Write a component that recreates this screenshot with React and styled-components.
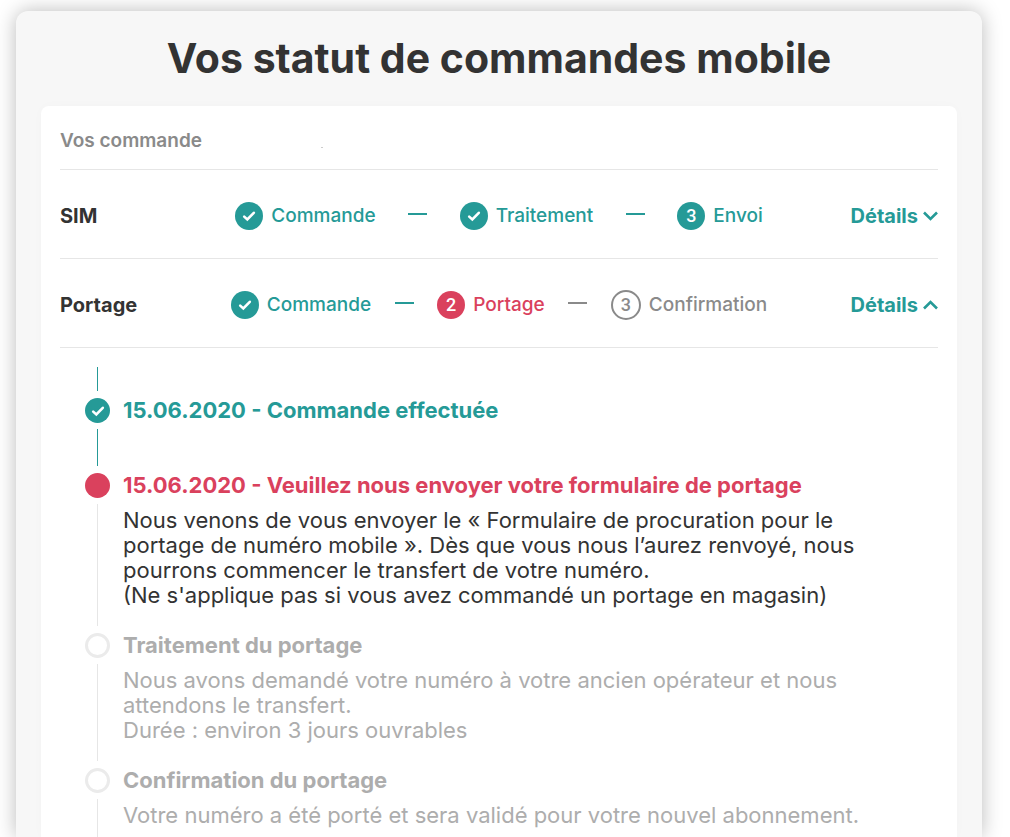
import React from "react";
import styled, { createGlobalStyle } from "styled-components";

const teal = "#259a97";
const red = "#da415d";
const grey = "#8a8a8a";
const pale = "#adadad";
const dark = "#333333";
const rule = "#e6e6e6";

const GlobalStyle = createGlobalStyle`
  * { box-sizing: border-box; }
  body {
    margin: 0;
    background: #ffffff;
    color: ${dark};
    font-family: Inter, "Liberation Sans", sans-serif;
  }
`;

const Page = styled.main`
  display: flex;
  min-height: 100vh;
  padding: 11px 28px 0 16px;
  overflow: hidden;
`;

const Panel = styled.section`
  flex: 1;
  display: flex;
  flex-direction: column;
  padding: 0 25px;
  border-radius: 12px 12px 0 0;
  background: #f7f7f7;
  box-shadow: 0 0 20px rgba(0, 0, 0, 0.27);
`;

const Title = styled.h1`
  margin: 0;
  height: 95px;
  line-height: 95px;
  font-size: 41px;
  font-weight: 700;
  text-align: center;
  white-space: nowrap;
`;

const Card = styled.div`
  flex: 1;
  display: flex;
  flex-direction: column;
  padding: 0 19px;
  border-radius: 8px 8px 0 0;
  background: #ffffff;
  box-shadow: 0 0 12px rgba(0, 0, 0, 0.02);
`;

const Row = styled.div`
  display: grid;
  grid-template-columns: 159px 1fr 159px;
  align-items: center;
  height: 89px;
  padding-top: 4px;
  border-bottom: 1px solid ${rule};
`;

const HeaderRow = styled.div`
  display: flex;
  align-items: center;
  gap: 119px;
  height: 64px;
  padding-top: 6px;
  border-bottom: 1px solid ${rule};
`;

const Heading = styled.h2`
  margin: 0;
  font-size: 19px;
  line-height: 24px;
  font-weight: 600;
  color: ${grey};
`;

const RowName = styled.h2`
  margin: 0;
  font-size: 20px;
  line-height: 24px;
  font-weight: 700;
`;

const OrderMark = styled.span`
  width: 2px;
  height: 1px;
  margin-top: 14px;
  background: #cccccc;
`;

const Steps = styled.ol`
  display: flex;
  justify-content: space-around;
  align-items: center;
  margin: 0;
  padding: 0;
  list-style: none;
`;

const Step = styled.li`
  display: flex;
  align-items: center;
  gap: 8px;
  font-size: 19px;
  line-height: 24px;
  font-weight: 500;
  color: ${(p) => p.$color};
`;

const Dash = styled.li`
  width: 19px;
  height: 2px;
  margin-bottom: 4px;
  background: ${(p) => p.$color};
`;

const Badge = styled.span`
  display: flex;
  align-items: center;
  justify-content: center;
  width: ${(p) => (p.$outline ? 30 : 28)}px;
  height: ${(p) => (p.$outline ? 30 : 28)}px;
  border-radius: 50%;
  border: ${(p) => (p.$outline ? "2px solid currentColor" : "none")};
  background: ${(p) => (p.$outline ? "#ffffff" : "currentColor")};
`;

const BadgeNumber = styled.span`
  font-family: Roboto, sans-serif;
  font-size: 18px;
  font-weight: 500;
  line-height: 20px;
  color: ${(p) => p.$color};
`;

const DetailsButton = styled.button`
  justify-self: end;
  display: flex;
  align-items: center;
  gap: 5px;
  padding: 0;
  border: 0;
  background: none;
  color: ${teal};
  font-family: inherit;
  font-size: 20px;
  line-height: 24px;
  font-weight: 700;
  cursor: pointer;
`;

const Timeline = styled.ol`
  flex: 1;
  display: flex;
  flex-direction: column;
  margin: 0;
  padding: 19px 0 0 25px;
  list-style: none;
`;

const Lead = styled.li`
  width: 1px;
  height: 24px;
  margin: 0 0 7px 12px;
  background: ${teal};
`;

const Item = styled.li`
  display: grid;
  grid-template-columns: 25px 1fr;
  column-gap: 13px;
  min-height: 75px;
  &:last-child {
    flex: 1;
    min-height: 0;
  }
`;

const Rail = styled.div`
  display: flex;
  flex-direction: column;
  align-items: center;
`;

const Dot = styled.span`
  display: flex;
  align-items: center;
  justify-content: center;
  width: 25px;
  height: 25px;
  border-radius: 50%;
  border: ${(p) => (p.$fill ? "none" : "3px solid #ebebeb")};
  background: ${(p) => p.$fill || "#ffffff"};
`;

const Line = styled.span`
  flex: 1;
  width: 1px;
  margin: 6px 0 ${(p) => (p.$last ? 0 : 7)}px;
  background: ${(p) => p.$color};
`;

const ItemTitle = styled.h3`
  margin: 0;
  font-size: 22px;
  line-height: 25px;
  font-weight: 700;
  color: ${(p) => p.$color};
`;

const ItemText = styled.p`
  margin: 0;
  padding: 10px 0 ${(p) => (p.$last ? 0 : 25)}px;
  font-size: 22px;
  line-height: 25px;
  color: ${(p) => p.$color};
`;

const Check = () => (
  <svg width="14" height="14" viewBox="0 0 14 14" fill="none" aria-hidden="true">
    <path d="M2.2 7.6 L5.3 10.4 L11.8 3.8" stroke="#fff" strokeWidth="2.6" strokeLinecap="round" strokeLinejoin="miter" />
  </svg>
);

const Chevron = ({ up }) => (
  <svg width="15" height="10" viewBox="0 0 15 10" fill="none" aria-hidden="true">
    <path d={up ? "M1 8.5 L7.5 2 L14 8.5" : "M1 1.5 L7.5 8 L14 1.5"} stroke="currentColor" strokeWidth="2.6" />
  </svg>
);

const orders = [
  {
    name: "SIM",
    steps: [
      { label: "Commande", color: teal, done: true },
      { label: "Traitement", color: teal, done: true },
      { label: "Envoi", color: teal, number: 3 },
    ],
  },
  {
    name: "Portage",
    open: true,
    steps: [
      { label: "Commande", color: teal, done: true },
      { label: "Portage", color: red, number: 2 },
      { label: "Confirmation", color: grey, number: 3, outline: true },
    ],
  },
];

const events = [
  { title: "15.06.2020 - Commande effectuée", color: teal, line: teal, done: true },
  {
    title: "15.06.2020 - Veuillez nous envoyer votre formulaire de portage",
    color: red,
    textColor: dark,
    lines: [
      "Nous venons de vous envoyer le « Formulaire de procuration pour le",
      "portage de numéro mobile ». Dès que vous nous l’aurez renvoyé, nous",
      "pourrons commencer le transfert de votre numéro.",
      "(Ne s'applique pas si vous avez commandé un portage en magasin)",
    ],
  },
  {
    title: "Traitement du portage",
    lines: [
      "Nous avons demandé votre numéro à votre ancien opérateur et nous",
      "attendons le transfert.",
      "Durée : environ 3 jours ouvrables",
    ],
  },
  {
    title: "Confirmation du portage",
    lines: ["Votre numéro a été porté et sera validé pour votre nouvel abonnement."],
  },
];

function OrderRow({ order }) {
  return (
    <Row>
      <RowName>{order.name}</RowName>
      <Steps>
        {order.steps.map((step, i) => (
          <React.Fragment key={step.label}>
            {i > 0 && <Dash aria-hidden="true" $color={step.outline ? grey : teal} />}
            <Step $color={step.color}>
              <Badge $outline={step.outline}>
                {step.done ? (
                  <Check />
                ) : (
                  <BadgeNumber $color={step.outline ? grey : "#ffffff"}>{step.number}</BadgeNumber>
                )}
              </Badge>
              {step.label}
            </Step>
          </React.Fragment>
        ))}
      </Steps>
      <DetailsButton type="button" aria-expanded={!!order.open}>
        Détails
        <Chevron up={order.open} />
      </DetailsButton>
    </Row>
  );
}

export default function App() {
  return (
    <>
      <GlobalStyle />
      <Page>
        <Panel>
          <Title>Vos statut de commandes mobile</Title>
          <Card>
            <HeaderRow>
              <Heading>Vos commande</Heading>
              <OrderMark />
            </HeaderRow>
            {orders.map((order) => (
              <OrderRow key={order.name} order={order} />
            ))}
            <Timeline>
              <Lead aria-hidden="true" />
              {events.map((event, i) => {
                const last = i === events.length - 1;
                return (
                  <Item key={event.title}>
                    <Rail>
                      <Dot $fill={event.color}>{event.done && <Check />}</Dot>
                      <Line $color={event.line || rule} $last={last} />
                    </Rail>
                    <div>
                      <ItemTitle $color={event.color || pale}>{event.title}</ItemTitle>
                      {event.lines && (
                        <ItemText $color={event.textColor || pale} $last={last}>
                          {event.lines.map((line, n) => (
                            <React.Fragment key={line}>
                              {n > 0 && <br />}
                              {line}
                            </React.Fragment>
                          ))}
                        </ItemText>
                      )}
                    </div>
                  </Item>
                );
              })}
            </Timeline>
          </Card>
        </Panel>
      </Page>
    </>
  );
}
